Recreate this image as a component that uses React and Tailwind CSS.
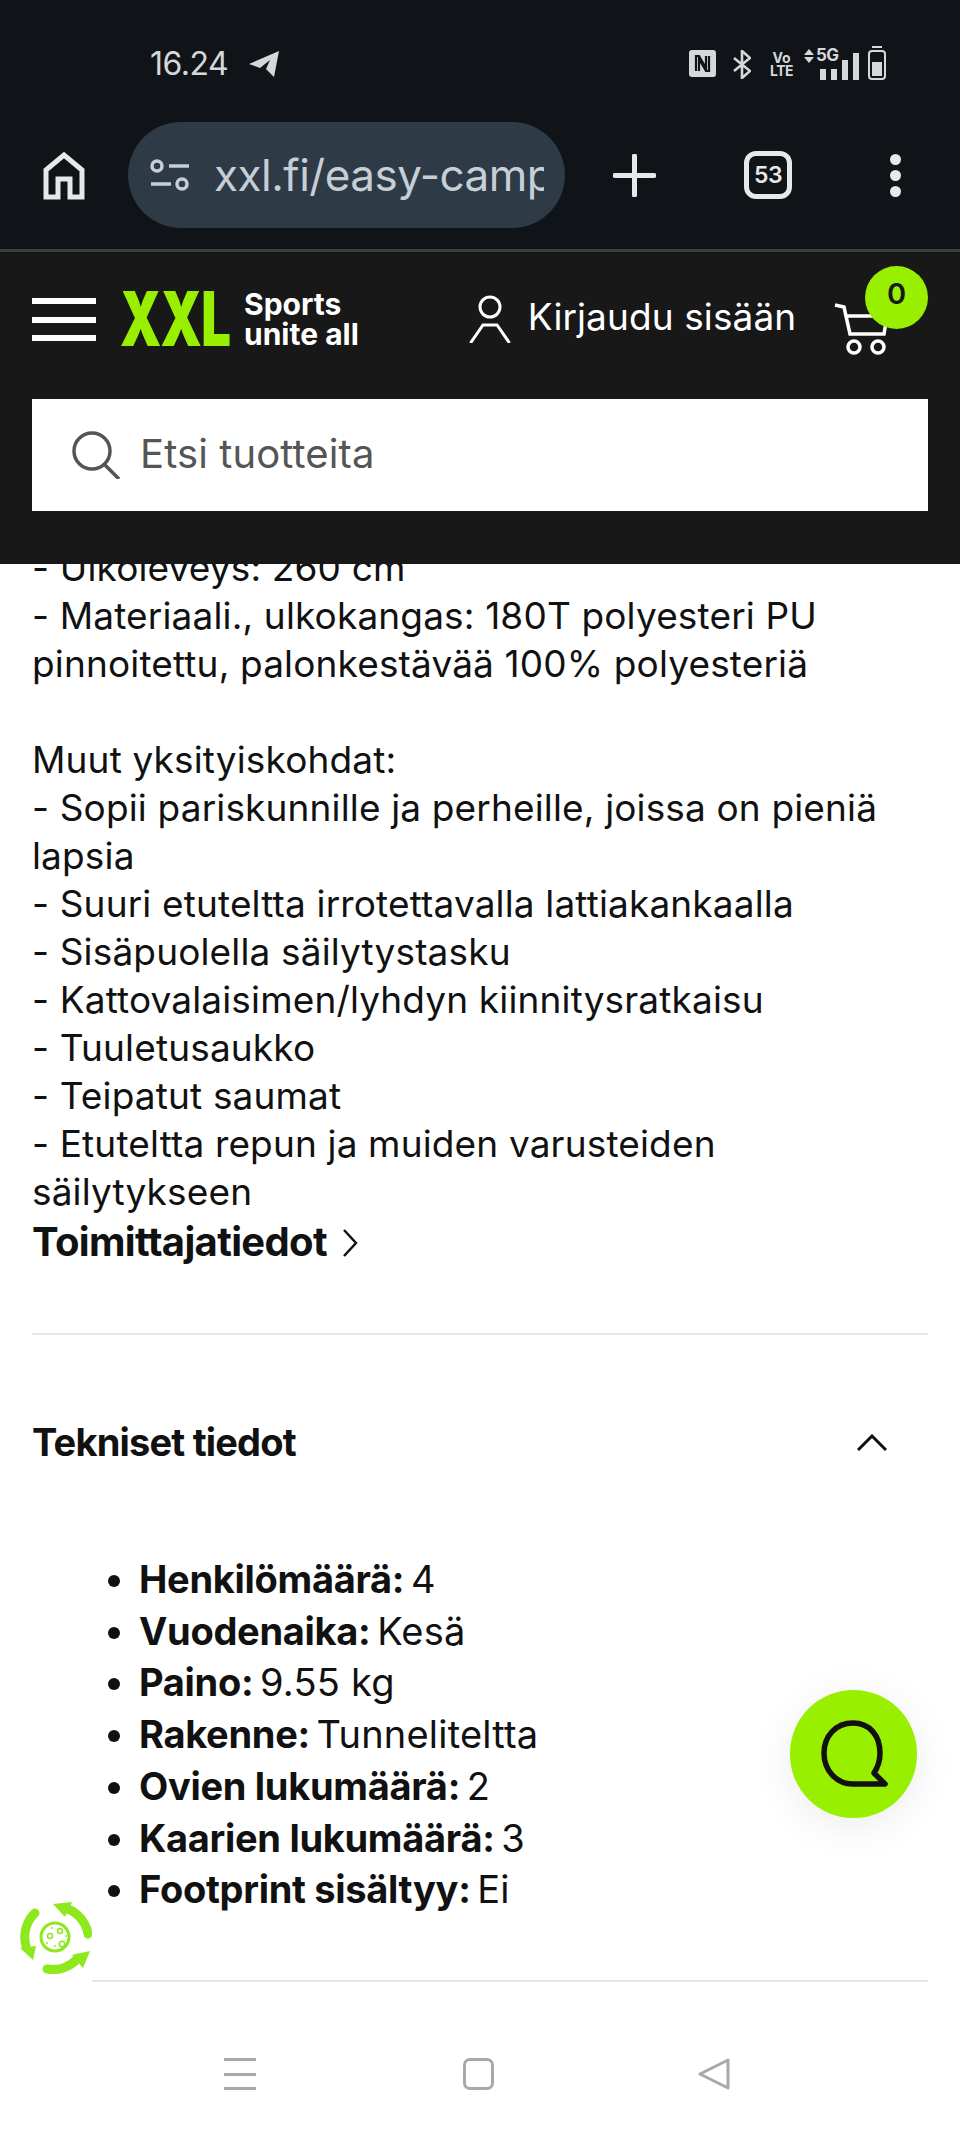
const specs = [
  ['Henkilömäärä:', '4'],
  ['Vuodenaika:', 'Kesä'],
  ['Paino:', '9.55 kg'],
  ['Rakenne:', 'Tunneliteltta'],
  ['Ovien lukumäärä:', '2'],
  ['Kaarien lukumäärä:', '3'],
  ['Footprint sisältyy:', 'Ei'],
];

function StatusBar() {
  return (
    <div className="h-[100px] flex pt-[46px] pl-[150px] pr-[74px] justify-between items-start text-[#d5d7d9]">
      <div className="flex items-center gap-[21px] h-[36px]">
        <span className="text-[32px] leading-[36px] tracking-[-0.5px]">16.24</span>
        {/* telegram arrow */}
        <svg width="31" height="26" viewBox="0 0 31 26" fill="currentColor"><path d="M0 13 L30 0 L25 26 L17 18 L21 9 L11 17 Z" /></svg>
      </div>
      <div className="flex items-start">
        {/* nfc */}
        <svg width="27" height="27" viewBox="0 0 27 27" className="mt-[4px]">
          <rect width="27" height="27" rx="3" fill="currentColor" />
          <path d="M7 21V6h3l7 12V6M20 6v15h-3L10 9v12" fill="none" stroke="#101317" strokeWidth="2.2" />
        </svg>
        {/* bluetooth */}
        <svg width="18" height="29" viewBox="0 0 18 29" fill="none" stroke="currentColor" strokeWidth="2.6" className="mt-[4px] ml-[17px]">
          <path d="M1 8l16 13-8 7V1l8 7L1 21" />
        </svg>
        <div className="w-[21px] mt-[5px] ml-[20px] flex flex-col items-center font-bold text-[14px] leading-[13px]">
          <span>Vo</span>
          <span className="tracking-[-0.5px]">LTE</span>
        </div>
        <div className="relative w-[54px] h-[34px] ml-[12px]">
          <svg width="10" height="14" viewBox="0 0 10 14" fill="currentColor" className="absolute left-0 top-[3px]"><path d="M5 0l5 6H0zM5 14L0 8h10z" /></svg>
          <span className="absolute left-[12px] top-[2px] text-[17px] leading-[15px] font-bold tracking-[-0.5px]">5G</span>
          <div className="absolute left-[16px] top-[4px] bottom-0 flex items-end gap-[5px]">
            <span className="w-[6px] h-[11px] bg-[#d5d7d9]" />
            <span className="w-[6px] h-[11px] bg-[#d5d7d9]" />
            <span className="w-[6px] h-[20px] bg-[#d5d7d9]" />
            <span className="w-[6px] h-[27px] bg-[#d5d7d9]" />
          </div>
        </div>
        {/* battery */}
        <div className="flex flex-col items-center ml-[10px]">
          <span className="w-[10px] h-[2px] bg-[#d5d7d9]" />
          <div className="w-[18px] h-[30px] mt-[2px] border-2 border-[#d5d7d9] rounded-[4px] flex items-end p-[2px]">
            <span className="w-full h-[14px] bg-[#d5d7d9]" />
          </div>
        </div>
      </div>
    </div>
  );
}

function Toolbar() {
  return (
    <div className="h-[149px] flex items-start pt-[22px] text-[#e6e8ea]">
      <svg width="42" height="48" viewBox="0 0 42 48" fill="none" stroke="currentColor" strokeWidth="5" className="ml-[43px] mt-[30px]">
        <path d="M3 45V18L21 3l18 15v27H27V27H15v18Z" />
      </svg>
      <div className="ml-[43px] w-[437px] h-[106px] rounded-full bg-[#2e3a46] flex items-center pl-[22px] pr-[21px]">
        <svg width="40" height="32" viewBox="0 0 40 32" fill="none" stroke="#c6ced6" strokeWidth="3.5" className="shrink-0">
          <circle cx="7" cy="7" r="5" />
          <path d="M19 7h20M1 25h20" />
          <circle cx="32" cy="25" r="5" />
        </svg>
        <div className="ml-[24px] w-[330px] overflow-hidden whitespace-nowrap text-[44px] leading-[60px] text-[#c6ced6] tracking-[-0.5px]">xxl.fi/easy-camp-tunnel</div>
      </div>
      <svg width="43" height="43" viewBox="0 0 43 43" stroke="currentColor" strokeWidth="5" strokeLinecap="round" className="ml-[48px] mt-[32px]">
        <path d="M21.5 2v39M2 21.5h39" />
      </svg>
      <div className="ml-[88px] mt-[29px] w-[48px] h-[48px] border-[5px] border-[#e6e8ea] rounded-[12px] flex items-center justify-center text-[23px] font-semibold tracking-[-0.5px]">53</div>
      <div className="ml-[98px] mt-[32px] flex flex-col gap-[5px]">
        <span className="w-[11px] h-[11px] rounded-full bg-[#e6e8ea]" />
        <span className="w-[11px] h-[11px] rounded-full bg-[#e6e8ea]" />
        <span className="w-[11px] h-[11px] rounded-full bg-[#e6e8ea]" />
      </div>
    </div>
  );
}

function SiteHeader() {
  return (
    <header className="relative z-10 h-[312px] bg-[#181818] px-[32px] text-white">
      <div className="flex items-start h-[147px]">
        <div className="mt-[46px] w-[64px] h-[43px] flex flex-col justify-between">
          <span className="h-[6px] bg-white" />
          <span className="h-[6px] bg-white" />
          <span className="h-[6px] bg-white" />
        </div>
        <div className="ml-[24px] mt-[40px] w-[110px] h-[54px]">
          <span className="block origin-left scale-x-[.7] font-black text-[75px] leading-[54px] tracking-[-1px] text-[#98f000] whitespace-nowrap">XXL</span>
        </div>
        <div className="ml-[14px] mt-[37px] font-bold text-[30px] leading-[30px] whitespace-nowrap">Sports<br />unite all</div>
        <svg width="42" height="48" viewBox="0 0 42 48" fill="none" stroke="currentColor" strokeWidth="3" className="ml-[110px] mt-[43px] shrink-0">
          <circle cx="21" cy="12" r="10" />
          <path d="M1.5 48L14 30h14l12.5 18" />
        </svg>
        <span className="ml-[17px] mt-[42px] text-[37px] leading-[46px] tracking-[0.1px] whitespace-nowrap">Kirjaudu sisään</span>
        <svg width="54" height="52" viewBox="0 0 54 52" fill="none" stroke="currentColor" strokeWidth="3.5" className="ml-[38px] mt-[51px] shrink-0">
          <path d="M1 2l9 2 6 27h34l3-18H11" />
          <circle cx="20" cy="44" r="6" />
          <circle cx="44" cy="44" r="6" />
        </svg>
      </div>
      {/* cart counter sits on top of the basket */}
      <div className="absolute left-[865px] top-[14px] w-[63px] h-[63px] rounded-full bg-[#98f000] text-[#181818] flex justify-center pt-[10px] text-[29px] leading-[36px] font-semibold">0</div>
      <div className="h-[112px] bg-white flex items-center pl-[40px]">
        <svg width="48" height="48" viewBox="0 0 48 48" fill="none" stroke="#555" strokeWidth="3.5">
          <circle cx="20" cy="20" r="18" />
          <path d="M33 34l14 14" />
        </svg>
        <span className="ml-[20px] -mt-[2px] text-[40px] leading-[50px] text-[#555] tracking-[0.1px]">Etsi tuotteita</span>
      </div>
    </header>
  );
}

function Description() {
  return (
    <div className="text-[37px] leading-[48px] tracking-[0.15px] text-[#111]">
      - Ulkoleveys: 260 cm<br />
      - Materiaali., ulkokangas: 180T polyesteri PU<br />
      pinnoitettu, palonkestävää 100% polyesteriä<br />
      <br />
      Muut yksityiskohdat:<br />
      - Sopii pariskunnille ja perheille, joissa on pieniä<br />
      lapsia<br />
      - Suuri etuteltta irrotettavalla lattiakankaalla<br />
      - Sisäpuolella säilytystasku<br />
      - Kattovalaisimen/lyhdyn kiinnitysratkaisu<br />
      - Tuuletusaukko<br />
      - Teipatut saumat<br />
      - Etuteltta repun ja muiden varusteiden<br />
      säilytykseen
    </div>
  );
}

function RecycleBadge() {
  return (
    <div className="absolute left-0 top-[1896px] w-[92px] h-[90px] bg-white">
      <svg width="92" height="90" viewBox="0 16 92 90" fill="none" stroke="#8de81c" strokeLinecap="round">
        <g strokeWidth="9">
          <path d="M88 54A33 33 0 0 0 68 29" />
          <path d="M47 89A33 33 0 0 0 78 78" />
          <path d="M35 33A33 33 0 0 0 26 66" />
        </g>
        <g fill="#8de81c" stroke="none">
          <path d="M53 24L72 22L65 37Z" />
          <path d="M90 71L72 75L83 88Z" />
          <path d="M33 80L20 68L36 66Z" />
        </g>
        <circle cx="55" cy="57" r="14" strokeWidth="3" />
        <circle cx="50" cy="56" r="2.5" strokeWidth="1.5" />
        <circle cx="60" cy="51" r="2.5" strokeWidth="1.5" />
        <circle cx="62" cy="64" r="2.8" strokeWidth="1.5" />
        <g fill="#8de81c" stroke="none">
          <circle cx="55" cy="66" r="1" />
          <circle cx="52" cy="48" r="1" />
          <circle cx="66" cy="56" r="1" />
          <circle cx="47" cy="63" r="1" />
        </g>
      </svg>
    </div>
  );
}

export default function App() {
  return (
    <div className="relative w-[960px] h-[2133px] overflow-hidden bg-white font-['Inter','Noto_Sans',sans-serif]">
      <div className="bg-[#101317]">
        <StatusBar />
        <Toolbar />
        <div className="h-[3px] bg-[#3c3e42]" />
      </div>
      <SiteHeader />

      <main className="px-[32px] -mt-[20px] h-[1436px] text-[#111]">
        <Description />
        <div className="flex items-center h-[52px] gap-[15px]">
          <span className="text-[40px] leading-[52px] font-bold tracking-[-0.65px] whitespace-nowrap">Toimittajatiedot</span>
          <svg width="16" height="28" viewBox="0 0 16 28" fill="none" stroke="#111" strokeWidth="2.5" className="mt-[2px]"><path d="M2 1l12 13L2 27" /></svg>
        </div>
        <div className="mt-[65px] border-t-2 border-[#e6e6e6]" />
        <div className="mt-[84px] h-[46px] flex items-center justify-between pr-[41px]">
          <h2 className="text-[38px] leading-[46px] font-bold tracking-[-0.8px]">Tekniset tiedot</h2>
          <svg width="30" height="17" viewBox="0 0 30 17" fill="none" stroke="#111" strokeWidth="3"><path d="M1 16L15 2l14 14" /></svg>
        </div>
        <ul className="mt-[89px] pl-[107px] list-disc text-[38px] leading-[51.7px]">
          {specs.map(([label, value]) => (
            <li key={label}><strong className="font-bold tracking-[-0.3px]">{label}</strong> <span className="-ml-[4px] tracking-[0.2px]">{value}</span></li>
          ))}
        </ul>
        <div className="mt-[64px] border-t-2 border-[#e6e6e6]" />
      </main>

      {/* android nav bar */}
      <nav className="mt-[62px] h-[64px] flex items-center pl-[224px]">
        <div className="w-[32px] h-[32px] flex flex-col justify-between">
          <span className="h-[3px] bg-[#a8a8a8]" />
          <span className="h-[3px] bg-[#a8a8a8]" />
          <span className="h-[3px] bg-[#a8a8a8]" />
        </div>
        <div className="ml-[207px] w-[31px] h-[32px] border-[3px] border-[#a8a8a8] rounded-[7px]" />
        <svg width="32" height="32" viewBox="0 0 32 32" fill="none" stroke="#a8a8a8" strokeWidth="3" strokeLinejoin="round" className="ml-[204px]">
          <path d="M30 2L2 16l28 14Z" />
        </svg>
      </nav>

      <RecycleBadge />

      {/* chat launcher */}
      <button className="absolute left-[790px] top-[1690px] w-[127px] h-[128px] rounded-full bg-[#98f000] shadow-[0_8px_40px_rgba(0,0,0,0.08)] flex items-center justify-center">
        <svg width="68" height="68" viewBox="0 0 68 68" fill="none" stroke="#111" strokeWidth="5.5" strokeLinejoin="round">
          <path d="M33 3C50 3 60 16 60 33C60 41 58 47 54 53L65 64H33C16 64 4 50 4 33C4 16 16 3 33 3Z" />
        </svg>
      </button>
    </div>
  );
}
